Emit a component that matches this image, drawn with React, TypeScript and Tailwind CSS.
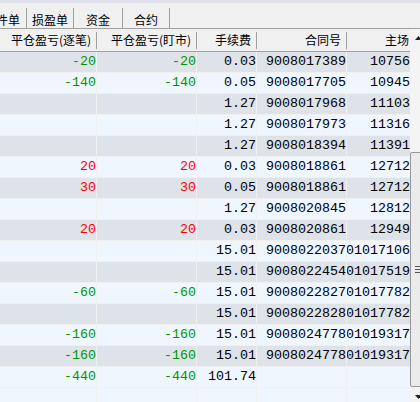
import React from "react"

type Row = { a: string; b: string; fee: string; no: string; zc: string }

const rows: Row[] = [
  { a: "-20", b: "-20", fee: "0.03", no: "9008017389", zc: "10756" },
  { a: "-140", b: "-140", fee: "0.05", no: "9008017705", zc: "10945" },
  { a: "", b: "", fee: "1.27", no: "9008017968", zc: "11103" },
  { a: "", b: "", fee: "1.27", no: "9008017973", zc: "11316" },
  { a: "", b: "", fee: "1.27", no: "9008018394", zc: "11391" },
  { a: "20", b: "20", fee: "0.03", no: "9008018861", zc: "12712" },
  { a: "30", b: "30", fee: "0.05", no: "9008018861", zc: "12712" },
  { a: "", b: "", fee: "1.27", no: "9008020845", zc: "12812" },
  { a: "20", b: "20", fee: "0.03", no: "9008020861", zc: "12949" },
  { a: "", b: "", fee: "15.01", no: "9008022037", zc: "01017106" },
  { a: "", b: "", fee: "15.01", no: "9008022454", zc: "01017519" },
  { a: "-60", b: "-60", fee: "15.01", no: "9008022827", zc: "01017782" },
  { a: "", b: "", fee: "15.01", no: "9008022828", zc: "01017782" },
  { a: "-160", b: "-160", fee: "15.01", no: "9008024778", zc: "01019317" },
  { a: "-160", b: "-160", fee: "15.01", no: "9008024778", zc: "01019317" },
  { a: "-440", b: "-440", fee: "101.74", no: "", zc: "" },
]

const tabs = [
  { label: "条件单", cls: "w-[27px] justify-end pr-[6px]" },
  { label: "损盈单", cls: "w-[47px] justify-center" },
  { label: "资金", cls: "w-[49px] justify-center" },
  { label: "合约", cls: "w-[47px] justify-center" },
]

const headers = ["平仓盈亏(逐笔)", "平仓盈亏(盯市)", "手续费", "合同号"]

const cols = "grid grid-cols-[97px_100px_60px_90px_63px]"
const cell = "flex items-center justify-end overflow-hidden whitespace-nowrap"

function Pnl({ v }: { v: string }) {
  if (!v) return null
  return <span className={v.startsWith("-") ? "text-[#009600]" : "text-[#ff0000]"}>{v}</span>
}

export default function App() {
  return (
    <div className="w-[420px] h-[402px] overflow-hidden bg-[#f0f0f0] text-black font-['Liberation_Mono',monospace] text-[13.33px]">
      <div className="h-[3px] bg-[#e1e1ec]" />

      {/* tabs */}
      <div className="h-[25px] flex items-end font-['Noto_Sans_CJK_SC',sans-serif] text-[12px]">
        {tabs.map((t) => (
          <div
            key={t.label}
            className={`h-[20px] pt-[4px] flex items-center overflow-hidden whitespace-nowrap border-r border-[#a0a0a0] ${t.cls}`}
          >
            {t.label}
          </div>
        ))}
      </div>
      <div className="h-px bg-[#a0a0a0]" />

      <div className="flex">
        <div className="w-[410px] shrink-0">
          {/* header */}
          <div className={`${cols} h-[23px] border-b border-[#a0a0a0] font-['Noto_Sans_CJK_SC',sans-serif] text-[12px]`}>
            {headers.map((h) => (
              <div key={h} className="flex items-center justify-end">
                <span className="pr-[5px]">{h}</span>
                <div className="w-px h-[17px] bg-[#a0a0a0]" />
              </div>
            ))}
            <div className="flex items-center justify-end pr-[1px]">主场</div>
          </div>

          {/* rows */}
          {rows.map((r, i) => (
            <div
              key={i}
              className={`${cols} h-[21px] border-b border-[#f0f0f0] ${i % 2 === 0 ? "bg-[#dee3ea]" : "bg-[#eff6fe]"}`}
            >
              <div className={`${cell} border-r border-[#f0f0f0]`}><Pnl v={r.a} /></div>
              <div className={`${cell} border-r border-[#f0f0f0]`}><Pnl v={r.b} /></div>
              <div className={`${cell} border-r border-[#f0f0f0]`}>{r.fee}</div>
              <div className={`${cell} border-r border-[#f0f0f0]`}>{r.no}</div>
              <div className={cell}>{r.zc}</div>
            </div>
          ))}

          {/* empty area */}
          <div className={`${cols} h-[30px] bg-[#eff6fe]`}>
            <div className="border-r border-[#f0f0f0]" />
            <div className="border-r border-[#f0f0f0]" />
            <div className="border-r border-[#f0f0f0]" />
            <div className="border-r border-[#f0f0f0]" />
            <div />
          </div>
        </div>

        {/* scrollbar */}
        <div className="w-[17px] shrink-0 flex flex-col bg-[#f4f4f4]">
          <div className="h-[17px] flex items-center justify-center">
            <svg width="7" height="4" viewBox="0 0 7 4">
              <path d="M3.5 0L7 4H0z" fill="#222" />
            </svg>
          </div>
          <div className="h-[106px]" />
          <div className="h-[235px] border border-[#979797] rounded-[2px] bg-[#ebebeb] flex items-center justify-center">
            <svg width="7" height="7" viewBox="0 0 7 7">
              <path d="M0 0.5H7M0 3.5H7M0 6.5H7" stroke="#555" strokeWidth="1" />
            </svg>
          </div>
          <div className="h-px" />
          <div className="h-[17px] flex items-center justify-center">
            <svg width="7" height="4" viewBox="0 0 7 4">
              <path d="M0 0H7L3.5 4z" fill="#222" />
            </svg>
          </div>
        </div>
      </div>
    </div>
  )
}
